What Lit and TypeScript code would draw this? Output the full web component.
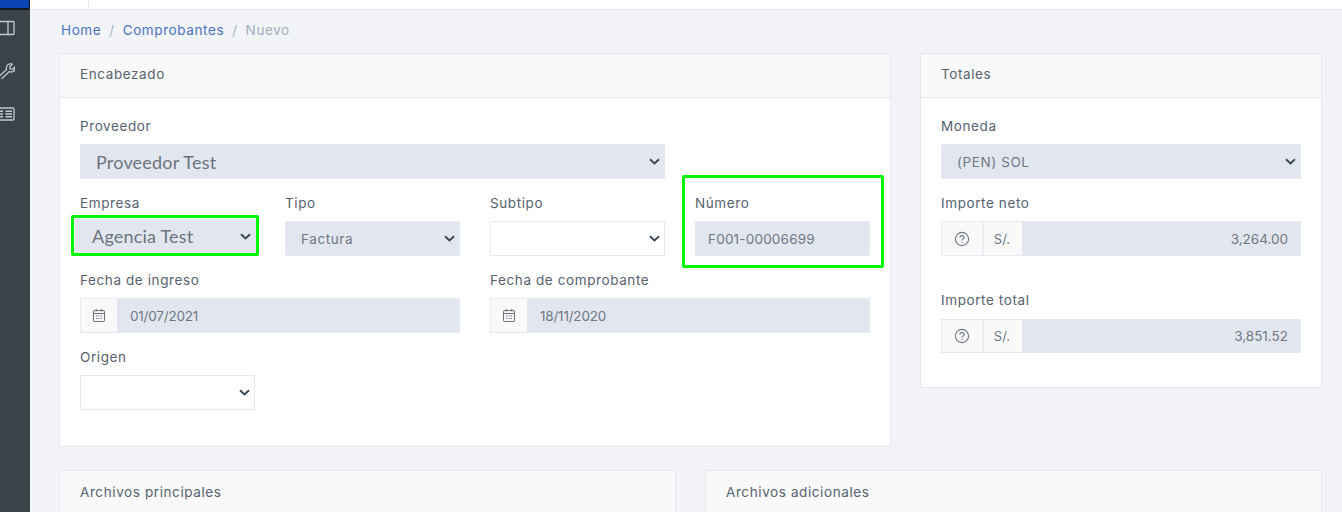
import { LitElement, html, css } from "lit";
import { customElement } from "lit/decorators.js";

const chevron = html`<svg class="chev" width="11" height="7" viewBox="0 0 11 7"><path d="M1 1.2 5.5 5.4 10 1.2" fill="none" stroke="#3a4752" stroke-width="1.9"/></svg>`;
const calendar = html`<svg width="14" height="15" viewBox="0 0 14 15" fill="none" stroke="#6f7780" stroke-width="1.1"><rect x="1.5" y="2.5" width="11" height="11" rx="1.6"/><path d="M1.5 5.5h11M4.3 1v2.4M9.7 1v2.4"/><path d="M4 8h1.2M6.4 8h1.2M8.8 8H10M4 10.5h1.2M6.4 10.5h1.2M8.8 10.5H10" stroke-width="1.2"/></svg>`;
const question = html`<svg width="16" height="16" viewBox="0 0 16 16" fill="none" stroke="#6f7780" stroke-width="1.1"><circle cx="8" cy="8" r="6.6"/><path d="M5.9 6.4C5.9 5.2 6.9 4.6 8 4.6s2.1.7 2.1 1.8c0 1.5-2.1 1.6-2.1 3"/><path d="M8 10.7v1.2"/></svg>`;

@customElement("app-root")
export class AppRoot extends LitElement {
  static styles = css`
    :host { display: block; width: 1342px; height: 512px; overflow: hidden; background: #f2f4f8; font-family: Inter, "Liberation Sans", sans-serif; font-size: 13.5px; letter-spacing: 0.6px; color: #56626f; }
    .app { display: flex; height: 512px; }
    .side { width: 30px; flex: none; background: #3a4347; display: flex; flex-direction: column; overflow: hidden; }
    .side-top { height: 8px; flex: none; background: #0b45b5; border: solid #14181c; border-width: 0 1px 2px 0; border-radius: 0 0 3px 0; }
    .side-icons { display: flex; flex-direction: column; align-items: flex-start; gap: 27px; padding-top: 10px; }
    .side-icons svg { display: block; }
    .main { flex: 1; min-width: 0; display: flex; flex-direction: column; }
    .top { height: 9px; flex: none; background: #fff; border-bottom: 1px solid #e4e7ee; display: flex; }
    .top-cell { width: 58px; border-right: 1px solid #e4e7ee; }
    .content { padding: 0 20px 0 29px; }
    .crumbs { height: 43px; box-sizing: border-box; padding: 0 0 4px 2px; display: flex; align-items: center; gap: 8px; }
    .crumbs a { color: #4a72c4; }
    .crumbs .sep { color: #a9b3c4; }
    .crumbs .cur { color: #a3aebf; }
    .row1 { display: flex; gap: 29px; align-items: flex-start; }
    .card { background: #fff; border: 1px solid #e4e8f1; box-sizing: border-box; }
    .head { height: 44px; box-sizing: border-box; padding: 0 20px 3px; display: flex; align-items: center; background: #f9f9fa; border-bottom: 1px solid #e4e8f1; }
    .enc { width: 832px; height: 394px; }
    .tot { width: 402px; height: 335px; }
    .body { padding: 19px 20px 0; }
    .grid { display: grid; grid-template-columns: repeat(4, 175px); column-gap: 30px; row-gap: 15px; }
    .s2 { grid-column: span 2; }
    .s3 { grid-column: span 3; }
    .first { grid-column: 1 / span 1; }
    .field { display: flex; flex-direction: column; position: relative; }
    label { height: 18px; line-height: 18px; margin-bottom: 9px; display: block; white-space: nowrap; }
    .ctl { height: 35px; box-sizing: border-box; background: #e2e6ef; border: 1px solid #e6eaf2; display: flex; align-items: center; padding: 0 4px 0 15px; color: #6e7884; }
    .ctl span { flex: 1; white-space: nowrap; }
    .ctl .digits { letter-spacing: 0.2px; }
    .ctl .date { letter-spacing: -0.2px; }
    .ctl .num { letter-spacing: 0; }
    .ctl.white { background: #fff; }
    .ctl.tight { padding-left: 12px; }
    .ctl.big { font-family: Lato, sans-serif; font-size: 18px; letter-spacing: 0.2px; color: #6b747d; }
    .ctl.ag { border: 0; margin: -2px -1px 2px -5px; padding: 0 5px 0 17px; }
    .ctl.ag span { padding-bottom: 2px; }
    .ctl.group { padding: 0; }
    .ctl.short { height: 34px; margin-top: 1px; }
    .addon { width: 42px; height: 100%; flex: none; background: #f9f9fa; border-right: 2px solid #e9edf4; display: flex; align-items: center; justify-content: center; box-sizing: border-box; }
    .addon.cal { width: 36px; border-right: 0; }
    .addon.cur { width: 38px; border-right: 0; padding-right: 2px; font-size: 13px; letter-spacing: 0; }
    .ctl.group > span { padding-left: 13px; }
    .ctl.group > span.num { text-align: right; padding: 0 12px 0 0; }
    .hl { position: absolute; border: 3px solid #00f500; border-radius: 2px; pointer-events: none; box-sizing: border-box; }
    .hl.emp { left: -9px; top: 21px; width: 188px; height: 41px; }
    .hl.numb { left: -13px; top: -19px; width: 202px; height: 93px; }
    .stack { display: flex; flex-direction: column; }
    .mt1 { margin-top: 15px; }
    .mt2 { margin-top: 35px; }
    .row2 { display: flex; gap: 29px; margin-top: 23px; }
    .row2 .card { width: 617px; height: 60px; }
    .row2 .head { padding-bottom: 1px; }
  `;

  render() {
    return html`<div class="app">
      <aside class="side">
        <div class="side-top"></div>
        <div class="side-icons">
          <svg width="15" height="16" viewBox="0 0 15 16" fill="none" stroke="#c3c8cb" stroke-width="1.3"><rect x="-4" y="1.5" width="18" height="13" rx="1"/><path d="M8 1.5v13"/></svg>
          <svg width="15" height="16" viewBox="0 0 15 16" fill="none" stroke="#c3c8cb" stroke-width="1.3"><path d="M-2 14.5 6.5 6.5C6 3.8 7 1.2 10 .8c1-.1 1.8.1 2.3.4L9.8 3.7l.5 2.2 2.2.5 2.2-2.4c.5 1.9-.2 3.9-2 4.7-1.3.5-2.4.3-3.4-.1L1.5 16"/></svg>
          <svg width="15" height="16" viewBox="0 0 15 16" fill="none" stroke="#c3c8cb" stroke-width="1.3"><rect x="-4" y="2" width="18" height="12" rx="1"/><path d="M5.5 5.2h6.5M5.5 8h6.5M5.5 10.8h6.5M0 5.2h3M0 8h3M0 10.8h3" stroke-width="1.5"/></svg>
        </div>
      </aside>
      <div class="main">
        <div class="top"><div class="top-cell"></div></div>
        <div class="content">
          <nav class="crumbs"><a>Home</a><span class="sep">/</span><a>Comprobantes</a><span class="sep">/</span><span class="cur">Nuevo</span></nav>
          <div class="row1">
            <section class="card enc">
              <div class="head">Encabezado</div>
              <div class="body">
                <div class="grid">
                  <div class="field s3"><label>Proveedor</label><div class="ctl big"><span>Proveedor Test</span>${chevron}</div></div>
                  <div></div>
                  <div class="field"><label>Empresa</label><div class="ctl big ag"><span>Agencia Test</span>${chevron}</div><div class="hl emp"></div></div>
                  <div class="field"><label>Tipo</label><div class="ctl"><span>Factura</span>${chevron}</div></div>
                  <div class="field"><label>Subtipo</label><div class="ctl white"><span></span>${chevron}</div></div>
                  <div class="field"><label>Número</label><div class="ctl tight"><span class="digits">F001-00006699</span></div><div class="hl numb"></div></div>
                  <div class="field s2"><label>Fecha de ingreso</label><div class="ctl group"><div class="addon cal">${calendar}</div><span class="date">01/07/2021</span></div></div>
                  <div class="field s2"><label>Fecha de comprobante</label><div class="ctl group"><div class="addon cal">${calendar}</div><span class="date">18/11/2020</span></div></div>
                  <div class="field first"><label>Origen</label><div class="ctl white"><span></span>${chevron}</div></div>
                </div>
              </div>
            </section>
            <section class="card tot">
              <div class="head">Totales</div>
              <div class="body stack">
                <div class="field"><label>Moneda</label><div class="ctl"><span>(PEN) SOL</span>${chevron}</div></div>
                <div class="field mt1"><label>Importe neto</label><div class="ctl group"><div class="addon">${question}</div><div class="addon cur">S/.</div><span class="num">3,264.00</span></div></div>
                <div class="field mt2"><label>Importe total</label><div class="ctl group short"><div class="addon">${question}</div><div class="addon cur">S/.</div><span class="num">3,851.52</span></div></div>
              </div>
            </section>
          </div>
          <div class="row2">
            <section class="card"><div class="head">Archivos principales</div></section>
            <section class="card"><div class="head">Archivos adicionales</div></section>
          </div>
        </div>
      </div>
    </div>`;
  }
}
